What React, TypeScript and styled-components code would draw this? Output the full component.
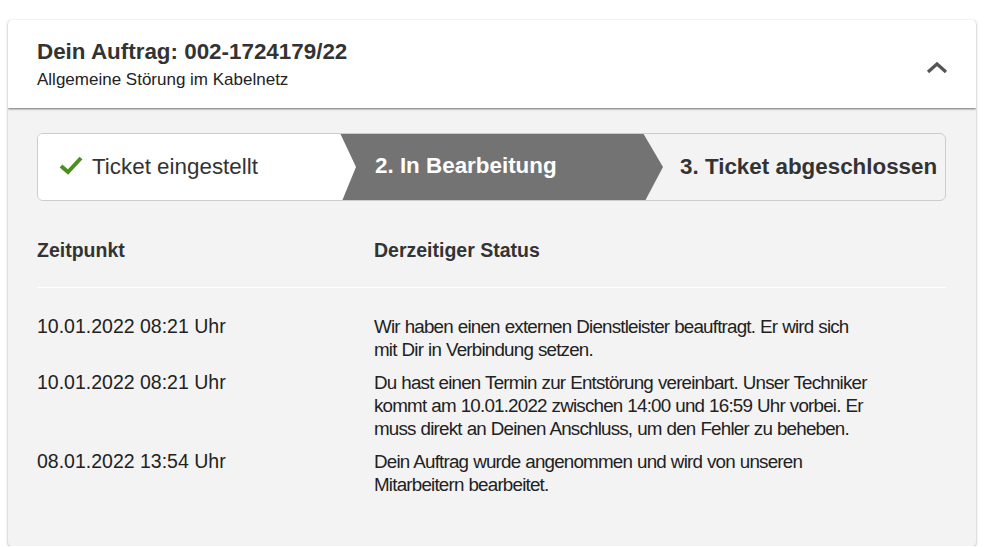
import React from "react";
import styled, { createGlobalStyle } from "styled-components";

const GlobalStyle = createGlobalStyle`
  html, body {
    margin: 0;
    padding: 0;
    background: #ffffff;
  }
  body {
    font-family: "Liberation Sans", Arial, sans-serif;
    color: #333333;
  }
`;

const Card = styled.section`
  margin: 20px 23px 0 8px;
  height: 526px;
  display: flex;
  flex-direction: column;
  background: #f3f3f3;
  border-radius: 4px;
  box-shadow: 0 1px 3px rgba(0, 0, 0, 0.35);
  overflow: hidden;
`;

const Header = styled.header`
  position: relative;
  z-index: 1;
  height: 88px;
  flex: 0 0 88px;
  box-sizing: border-box;
  padding: 18px 28px 0 29px;
  display: flex;
  justify-content: space-between;
  align-items: flex-start;
  background: #ffffff;
  box-shadow: 0 1px 2px rgba(0, 0, 0, 0.55);
`;

const Title = styled.h2`
  margin: 0;
  font-size: 22.4px;
  line-height: 27px;
  font-weight: 700;
  color: #333333;
`;

const Subtitle = styled.p`
  margin: 5px 0 0;
  font-size: 17px;
  line-height: 20px;
  color: #222222;
`;

const Toggle = styled.button`
  margin-top: 23px;
  padding: 0;
  border: none;
  background: none;
  display: flex;
  cursor: pointer;
`;

const Body = styled.div`
  flex: 1;
  padding: 25px 30px 0 29px;
`;

const Stepper = styled.div`
  display: flex;
  height: 68px;
  box-sizing: border-box;
  border: 1px solid #cccccc;
  border-radius: 6px;
  background: #f3f3f3;
  overflow: hidden;
`;

const Step = styled.div<{ $state: "done" | "active" | "open" }>`
  display: flex;
  align-items: center;
  font-size: 22.4px;
  white-space: nowrap;
  box-sizing: border-box;
  ${({ $state }) =>
    $state === "done" &&
    `
    flex: 0 0 318px;
    padding-left: 21px;
    background: #ffffff;
    color: #333333;
    font-weight: 400;
  `}
  ${({ $state }) =>
    $state === "active" &&
    `
    flex: 0 0 323px;
    margin: -1px 0 -1px -16px;
    padding: 0 0 2px 35px;
    background: #737373;
    color: #ffffff;
    font-weight: 700;
    clip-path: polygon(0 0, 303px 0, 100% 50%, 305px 100%, 2px 100%, 16px 50%);
  `}
  ${({ $state }) =>
    $state === "open" &&
    `
    flex: 1;
    margin-left: -20px;
    padding-left: 37px;
    color: #333333;
    font-weight: 700;
  `}
`;

const Check = styled.svg`
  width: 24px;
  height: 20px;
  margin-right: 9px;
  margin-top: -4px;
`;

const Table = styled.div`
  margin-top: 37px;
`;

const HeadRow = styled.div`
  display: grid;
  grid-template-columns: 337px 1fr;
  padding-bottom: 25px;
  border-bottom: 1px solid #ffffff;
  font-size: 19.5px;
  font-weight: 700;
  line-height: 24px;
`;

const Rows = styled.div`
  padding-top: 27px;
`;

const Row = styled.div`
  display: grid;
  grid-template-columns: 337px 497px;
  line-height: 23px;
  color: #222222;
  padding-bottom: 10px;
`;

const Time = styled.div`
  font-size: 19.5px;
`;

const Status = styled.div`
  font-size: 18.8px;
  letter-spacing: -0.8px;
  word-spacing: 0.5px;
`;

const steps = [
  { state: "done" as const, label: "Ticket eingestellt" },
  { state: "active" as const, label: "2. In Bearbeitung" },
  { state: "open" as const, label: "3. Ticket abgeschlossen" },
];

const entries = [
  {
    time: "10.01.2022 08:21 Uhr",
    text: "Wir haben einen externen Dienstleister beauftragt. Er wird sich mit Dir in Verbindung setzen.",
  },
  {
    time: "10.01.2022 08:21 Uhr",
    text: "Du hast einen Termin zur Entstörung vereinbart. Unser Techniker kommt am 10.01.2022 zwischen 14:00 und 16:59 Uhr vorbei. Er muss direkt an Deinen Anschluss, um den Fehler zu beheben.",
  },
  {
    time: "08.01.2022 13:54 Uhr",
    text: "Dein Auftrag wurde angenommen und wird von unseren Mitarbeitern bearbeitet.",
  },
];

export default function App() {
  return (
    <>
      <GlobalStyle />
      <Card>
        <Header>
          <div>
            <Title>Dein Auftrag: 002-1724179/22</Title>
            <Subtitle>Allgemeine Störung im Kabelnetz</Subtitle>
          </div>
          <Toggle aria-label="Einklappen">
            <svg width="22" height="14" viewBox="0 0 22 14">
              <path
                d="M2 11 L11 3 L20 11"
                fill="none"
                stroke="#555555"
                strokeWidth="3.2"
              />
            </svg>
          </Toggle>
        </Header>
        <Body>
          <Stepper>
            {steps.map((s) => (
              <Step key={s.label} $state={s.state}>
                {s.state === "done" && (
                  <Check viewBox="0 0 24 20">
                    <path
                      d="M2 11 L9 17 L22 3"
                      fill="none"
                      stroke="#4b8f1d"
                      strokeWidth="4"
                    />
                  </Check>
                )}
                {s.label}
              </Step>
            ))}
          </Stepper>
          <Table>
            <HeadRow>
              <div>Zeitpunkt</div>
              <div>Derzeitiger Status</div>
            </HeadRow>
            <Rows>
              {entries.map((e, i) => (
                <Row key={i}>
                  <Time>{e.time}</Time>
                  <Status>{e.text}</Status>
                </Row>
              ))}
            </Rows>
          </Table>
        </Body>
      </Card>
    </>
  );
}
